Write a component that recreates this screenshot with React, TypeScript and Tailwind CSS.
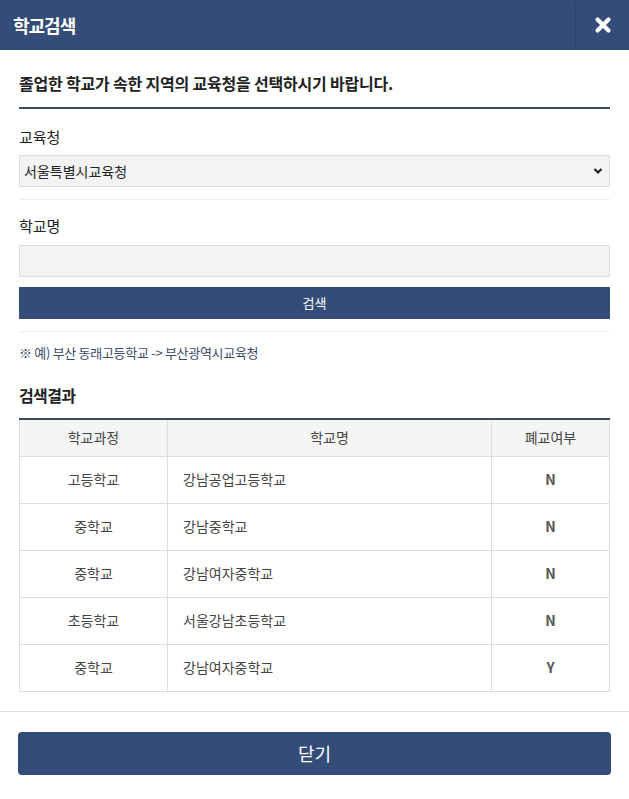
import { X } from 'lucide-react'

const rows = [
  { level: '고등학교', name: '강남공업고등학교', closed: 'N' },
  { level: '중학교', name: '강남중학교', closed: 'N' },
  { level: '중학교', name: '강남여자중학교', closed: 'N' },
  { level: '초등학교', name: '서울강남초등학교', closed: 'N' },
  { level: '중학교', name: '강남여자중학교', closed: 'Y' },
]

export default function App() {
  return (
    <div
      className="flex h-[799px] w-[629px] flex-col bg-white text-[#333]"
      style={{ fontFamily: '"Noto Sans CJK KR", "Noto Sans", sans-serif' }}
    >
      {/* 헤더 */}
      <div className="flex h-[50px] shrink-0 items-center justify-between bg-[#344d78] pl-[13px]">
        <h1 className="text-[18px] font-bold tracking-[-1px] text-white">학교검색</h1>
        <div className="flex h-[42px] w-[54px] items-center justify-center border-l border-[#2b4168]">
          <X className="h-[22px] w-[22px] text-white" strokeWidth={4.5} />
        </div>
      </div>

      {/* 본문 */}
      <div className="flex flex-col px-[19px]">
        <p className="mt-[22px] text-[16px] font-bold leading-[22px] tracking-[-0.2px] text-[#222]">
          졸업한 학교가 속한 지역의 교육청을 선택하시기 바랍니다.
        </p>
        <div className="mt-[13px] h-[2px] bg-[#3d4b5e]" />

        <label className="mt-[17px] text-[15px] leading-[22px] text-[#222]">교육청</label>
        <div className="mt-[7px] flex h-[32px] items-center justify-between border border-[#ddd] bg-[#f3f3f3] pl-[4px] pr-[4px]">
          <span className="text-[14px] text-[#222]">서울특별시교육청</span>
          <svg width="10" height="8" viewBox="0 0 10 8" className="mr-[2px]">
            <path d="M1.5 2 L5 5.5 L8.5 2" stroke="#222" strokeWidth="2.2" fill="none" />
          </svg>
        </div>
        <div className="mt-[12px] h-px bg-[#eee]" />

        <label className="mt-[15px] text-[15px] leading-[22px] text-[#222]">학교명</label>
        <div className="mt-[8px] h-[32px] border border-[#ddd] bg-[#f3f3f3]" />
        <button className="mt-[10px] h-[32px] bg-[#344d78] text-[13px] text-white">검색</button>
        <div className="mt-[12px] h-px bg-[#eee]" />

        <p className="mt-[12px] text-[13px] leading-[18px] tracking-[-0.3px] text-[#3a4a66]">
          ※ 예) 부산 동래고등학교 -&gt; 부산광역시교육청
        </p>

        <h2 className="mt-[22px] text-[16px] font-bold leading-[22px] tracking-[-0.6px] text-[#222]">검색결과</h2>
        <div className="mt-[12px] h-[2px] bg-[#3d4b5e]" />

        <table className="w-full border-collapse text-[14px]">
          <thead>
            <tr className="h-[36px] bg-[#f5f5f5] text-[#444]">
              <th className="w-[148px] border border-t-0 border-[#ddd] font-normal">학교과정</th>
              <th className="border border-t-0 border-[#ddd] font-normal">학교명</th>
              <th className="w-[118px] border border-t-0 border-[#ddd] font-normal">폐교여부</th>
            </tr>
          </thead>
          <tbody>
            {rows.map((r, i) => (
              <tr key={i} className="h-[47px]">
                <td className="border border-[#ddd] text-center text-[#444]">{r.level}</td>
                <td className="border border-[#ddd] pl-[15px] text-[#444]">{r.name}</td>
                <td className="border border-[#ddd] text-center font-bold text-[#555]">{r.closed}</td>
              </tr>
            ))}
          </tbody>
        </table>
      </div>

      {/* 하단 */}
      <div className="mt-[19px] h-px bg-[#ddd]" />
      <div className="px-[18px] pt-[20px]">
        <button className="h-[43px] w-full rounded-[4px] bg-[#344d78] text-[18px] text-white">닫기</button>
      </div>
    </div>
  )
}
